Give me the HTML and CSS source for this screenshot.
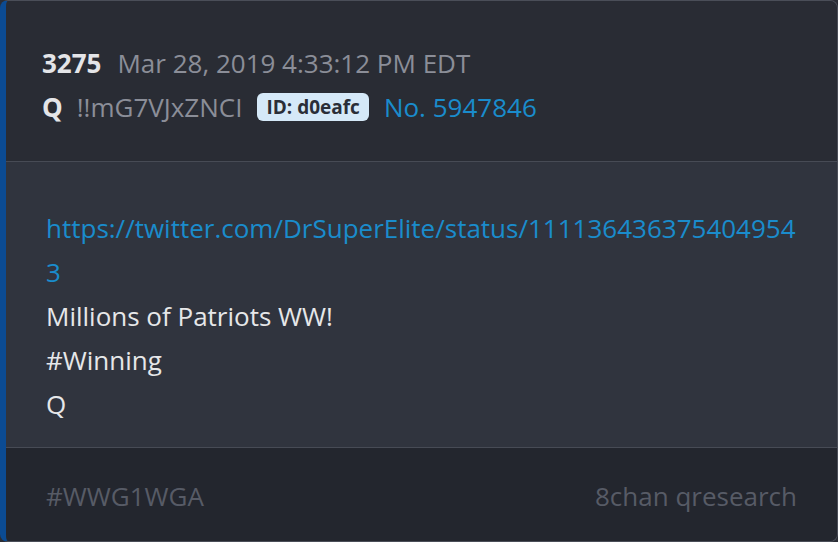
FILE: index.html
```html
<!DOCTYPE html>
<html>
<head>
<meta charset="utf-8">
<link rel="stylesheet" href="styles.css">
</head>
<body>
<div class="card">
  <div class="head">
    <div class="row"><span class="num">3275</span><span class="date">Mar 28, 2019 4:33:12 PM EDT</span></div>
    <div class="row"><span class="name">Q</span><span class="trip">!!mG7VJxZNCI</span><span class="badge">ID: d0eafc</span><a class="no">No. 5947846</a></div>
  </div>
  <div class="body">
    <a class="link">https://twitter.com/DrSuperElite/status/1111364363754049543</a>
    <div class="line">Millions of Patriots WW!</div>
    <div class="line">#Winning</div>
    <div class="line">Q</div>
  </div>
  <div class="foot">
    <span>#WWG1WGA</span>
    <span>8chan qresearch</span>
  </div>
</div>
</body>
</html>
```
FILE: styles.css
```css
html, body { margin: 0; padding: 0; background: #2b2e36; }
body { font-family: "Open Sans", "DejaVu Sans", sans-serif; }
.card {
  box-sizing: border-box;
  width: 838px;
  height: 542px;
  border: 1px solid #4a4e58;
  border-left: 6px solid #0b4b93;
  border-radius: 8px;
  overflow: hidden;
  display: flex;
  flex-direction: column;
  background: #30343e;
}
.head {
  background: #292c34;
  height: 161px;
  box-sizing: border-box;
  padding: 40px 36px 0;
  border-bottom: 1px solid #474b55;
  font-size: 26px;
  line-height: 44px;
}
.row { display: flex; align-items: center; height: 44px; }
.num { font-weight: 700; color: #e4e5e8; margin-right: 16px; }
.date { color: #8b8e98; }
.name { font-weight: 700; color: #e4e5e8; margin-right: 14px; }
.trip { color: #8b8e98; margin-right: 15px; }
.badge {
  background: #d5e9f8;
  color: #2a2e37;
  font-weight: 700;
  font-size: 19px;
  line-height: 28px;
  height: 28px;
  padding: 0 9px;
  border-radius: 6px;
  margin-right: 15px;
}
.no { color: #1a8ccc; }
.body {
  flex: 1;
  padding: 44px 40px 0;
  font-size: 26px;
  line-height: 44px;
  color: #e6e7e9;
  border-bottom: 1px solid #474b55;
}
.link { display: block; color: #1a8ccc; word-break: break-all; }
.foot {
  background: #23262e;
  height: 93px;
  box-sizing: border-box;
  padding: 26px 40px 0;
  display: flex;
  justify-content: space-between;
  font-size: 26px;
  line-height: 44px;
  color: #575b66;
}
```
